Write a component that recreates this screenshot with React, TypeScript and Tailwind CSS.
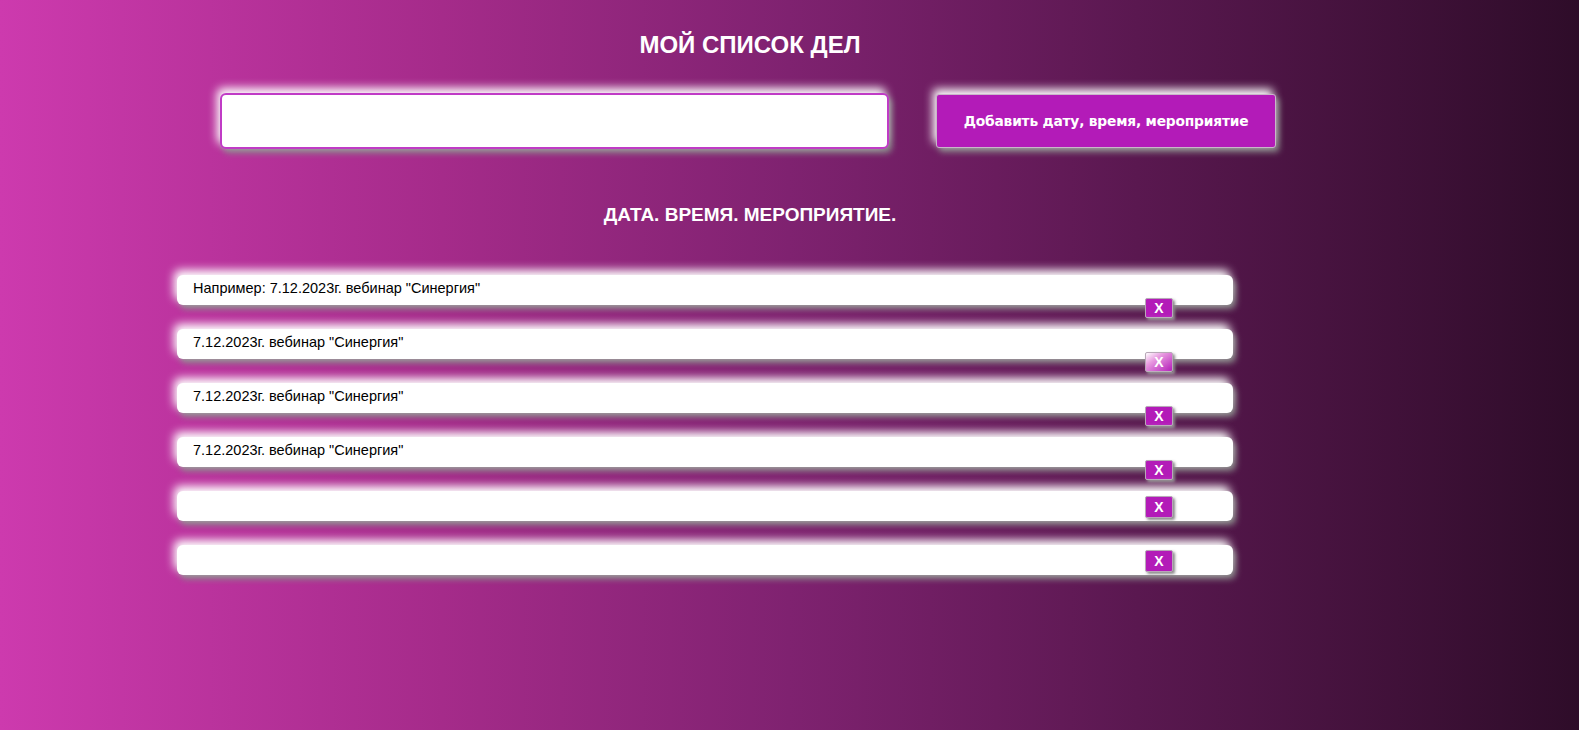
import React from "react";

const items = [
  'Например: 7.12.2023г. вебинар "Синергия"',
  '7.12.2023г. вебинар "Синергия"',
  '7.12.2023г. вебинар "Синергия"',
  '7.12.2023г. вебинар "Синергия"',
  "",
  "",
];

export default function App() {
  return (
    <div
      className="min-h-screen w-full bg-[linear-gradient(to_right,#cd3aae_0%,#a52b8a_28%,#7f2270_50%,#5a1850_72%,#2e0c29_100%)] font-['Liberation_Sans',Arial,sans-serif] overflow-hidden"
    >
      <div className="pt-[30px] w-[1500px] text-center">
        <h1 className="text-[24px] leading-[30px] font-bold text-white">МОЙ СПИСОК ДЕЛ</h1>
      </div>

      <div className="flex pl-[220px] pt-[33px]">
        <input
          type="text"
          className="w-[669px] h-[56px] bg-white border-2 border-[#c03bc6] rounded-[6px] outline-none shadow-[-3px_-5px_10px_#ffffff,3px_4px_6px_#8a8a8a]"
        />
        <button className="ml-[47px] mt-[1px] w-[340px] h-[54px] bg-[#b31bb8] border border-[#c9b7c9] rounded-[3px] text-white font-bold text-[13.8px] font-['DejaVu_Sans',Verdana,sans-serif] tracking-[-0.2px] shadow-[-3px_-5px_10px_#ffffff,3px_4px_6px_#8a8a8a]">
          Добавить дату, время, мероприятие
        </button>
      </div>

      <div className="pt-[54px] w-[1500px] text-center">
        <h2 className="text-[19px] leading-[24px] font-bold text-white">ДАТА. ВРЕМЯ. МЕРОПРИЯТИЕ.</h2>
      </div>

      <ul className="pl-[177px] pt-[48px] flex flex-col gap-[24px]">
        {items.map((t, i) => (
          <li
            key={i}
            className="w-[1056px] h-[30px] bg-white rounded-[6px] pt-[4px] flex flex-col shadow-[-3px_-5px_10px_#ffffff,3px_4px_6px_#8a8a8a]"
          >
            {t && (
              <span className="pl-[16px] text-[14.5px] leading-[18px] text-black">{t}</span>
            )}
            <button
              className={
                "self-end mr-[60px] mt-[1px] w-[28px] h-[22px] rounded-[2px] border border-[#b8a8b8] text-white font-bold text-[14px] leading-[18px] shadow-[2px_2px_3px_#8a8a8a] " +
                (i === 1
                  ? "bg-[linear-gradient(to_bottom_right,#ffffff_0%,#e89ae0_35%,#b31bb8_100%)]"
                  : "bg-[#b31bb8]")
              }
            >
              X
            </button>
          </li>
        ))}
      </ul>
    </div>
  );
}
